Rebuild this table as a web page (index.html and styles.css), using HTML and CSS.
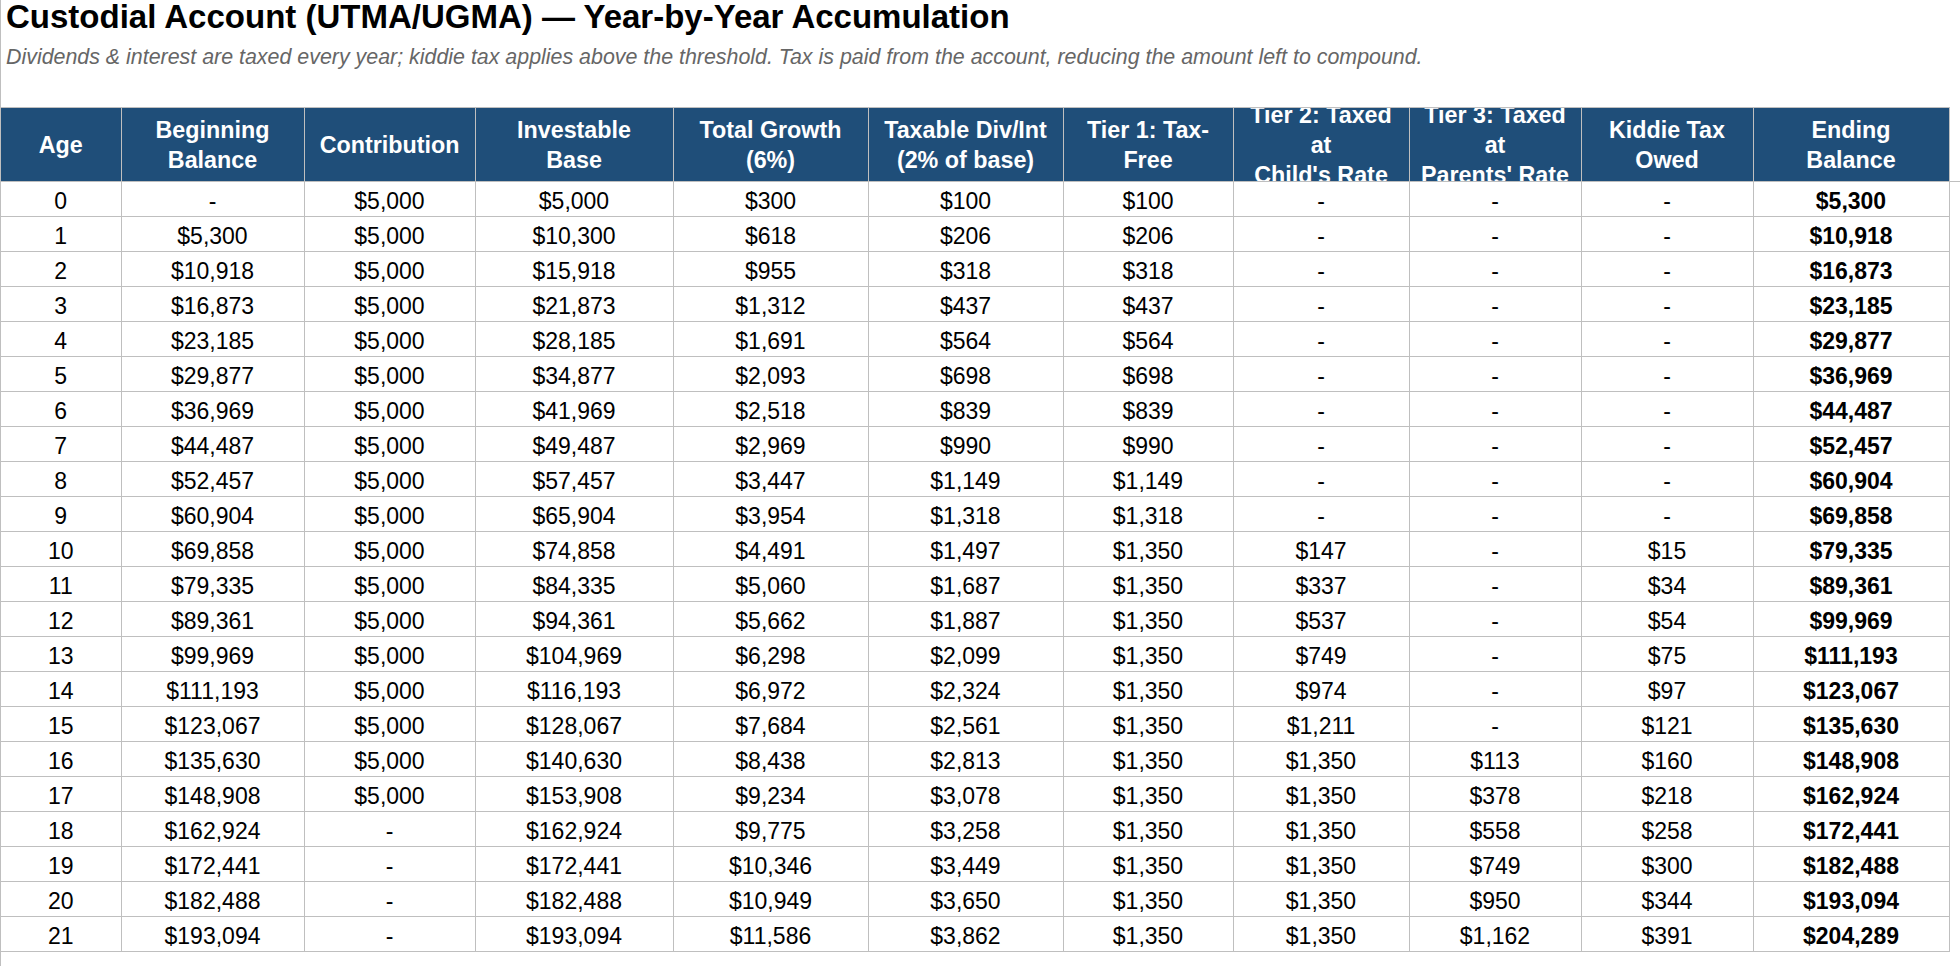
FILE: index.html
```html
<!DOCTYPE html>
<html lang="en">
<head>
<meta charset="utf-8">
<title>Custodial Account (UTMA/UGMA) — Year-by-Year Accumulation</title>
<link rel="stylesheet" href="styles.css">
</head>
<body>
<div class="sheet">
  <header class="sheet-head">
    <h1 class="title">Custodial Account (UTMA/UGMA) — Year-by-Year Accumulation</h1>
    <p class="subtitle">Dividends &amp; interest are taxed every year; kiddie tax applies above the threshold. Tax is paid from the account, reducing the amount left to compound.</p>
  </header>
  <table class="grid">
    <colgroup>
      <col class="c-age"><col class="c-beg"><col class="c-con"><col class="c-inv"><col class="c-gro"><col class="c-div"><col class="c-t1"><col class="c-t2"><col class="c-t3"><col class="c-kid"><col class="c-end"><col class="c-pad">
    </colgroup>
    <thead>
      <tr>
        <th class="hcell first"><div class="hd">Age</div></th>
        <th class="hcell"><div class="hd">Beginning<br>Balance</div></th>
        <th class="hcell"><div class="hd">Contribution</div></th>
        <th class="hcell"><div class="hd">Investable<br>Base</div></th>
        <th class="hcell"><div class="hd">Total Growth<br>(6%)</div></th>
        <th class="hcell"><div class="hd">Taxable Div/Int<br>(2% of base)</div></th>
        <th class="hcell"><div class="hd">Tier 1: Tax-Free</div></th>
        <th class="hcell"><div class="hd">Tier 2: Taxed at<br>Child's Rate</div></th>
        <th class="hcell"><div class="hd">Tier 3: Taxed at<br>Parents' Rate</div></th>
        <th class="hcell"><div class="hd">Kiddie Tax<br>Owed</div></th>
        <th class="hcell"><div class="hd">Ending<br>Balance</div></th>
        <th class="hpad"></th>
      </tr>
    </thead>
    <tbody>
      <tr><td class="first">0</td><td>-</td><td>$5,000</td><td>$5,000</td><td>$300</td><td>$100</td><td>$100</td><td>-</td><td>-</td><td>-</td><td class="end">$5,300</td><td class="pad"></td></tr>
      <tr><td class="first">1</td><td>$5,300</td><td>$5,000</td><td>$10,300</td><td>$618</td><td>$206</td><td>$206</td><td>-</td><td>-</td><td>-</td><td class="end">$10,918</td><td class="pad"></td></tr>
      <tr><td class="first">2</td><td>$10,918</td><td>$5,000</td><td>$15,918</td><td>$955</td><td>$318</td><td>$318</td><td>-</td><td>-</td><td>-</td><td class="end">$16,873</td><td class="pad"></td></tr>
      <tr><td class="first">3</td><td>$16,873</td><td>$5,000</td><td>$21,873</td><td>$1,312</td><td>$437</td><td>$437</td><td>-</td><td>-</td><td>-</td><td class="end">$23,185</td><td class="pad"></td></tr>
      <tr><td class="first">4</td><td>$23,185</td><td>$5,000</td><td>$28,185</td><td>$1,691</td><td>$564</td><td>$564</td><td>-</td><td>-</td><td>-</td><td class="end">$29,877</td><td class="pad"></td></tr>
      <tr><td class="first">5</td><td>$29,877</td><td>$5,000</td><td>$34,877</td><td>$2,093</td><td>$698</td><td>$698</td><td>-</td><td>-</td><td>-</td><td class="end">$36,969</td><td class="pad"></td></tr>
      <tr><td class="first">6</td><td>$36,969</td><td>$5,000</td><td>$41,969</td><td>$2,518</td><td>$839</td><td>$839</td><td>-</td><td>-</td><td>-</td><td class="end">$44,487</td><td class="pad"></td></tr>
      <tr><td class="first">7</td><td>$44,487</td><td>$5,000</td><td>$49,487</td><td>$2,969</td><td>$990</td><td>$990</td><td>-</td><td>-</td><td>-</td><td class="end">$52,457</td><td class="pad"></td></tr>
      <tr><td class="first">8</td><td>$52,457</td><td>$5,000</td><td>$57,457</td><td>$3,447</td><td>$1,149</td><td>$1,149</td><td>-</td><td>-</td><td>-</td><td class="end">$60,904</td><td class="pad"></td></tr>
      <tr><td class="first">9</td><td>$60,904</td><td>$5,000</td><td>$65,904</td><td>$3,954</td><td>$1,318</td><td>$1,318</td><td>-</td><td>-</td><td>-</td><td class="end">$69,858</td><td class="pad"></td></tr>
      <tr><td class="first">10</td><td>$69,858</td><td>$5,000</td><td>$74,858</td><td>$4,491</td><td>$1,497</td><td>$1,350</td><td>$147</td><td>-</td><td>$15</td><td class="end">$79,335</td><td class="pad"></td></tr>
      <tr><td class="first">11</td><td>$79,335</td><td>$5,000</td><td>$84,335</td><td>$5,060</td><td>$1,687</td><td>$1,350</td><td>$337</td><td>-</td><td>$34</td><td class="end">$89,361</td><td class="pad"></td></tr>
      <tr><td class="first">12</td><td>$89,361</td><td>$5,000</td><td>$94,361</td><td>$5,662</td><td>$1,887</td><td>$1,350</td><td>$537</td><td>-</td><td>$54</td><td class="end">$99,969</td><td class="pad"></td></tr>
      <tr><td class="first">13</td><td>$99,969</td><td>$5,000</td><td>$104,969</td><td>$6,298</td><td>$2,099</td><td>$1,350</td><td>$749</td><td>-</td><td>$75</td><td class="end">$111,193</td><td class="pad"></td></tr>
      <tr><td class="first">14</td><td>$111,193</td><td>$5,000</td><td>$116,193</td><td>$6,972</td><td>$2,324</td><td>$1,350</td><td>$974</td><td>-</td><td>$97</td><td class="end">$123,067</td><td class="pad"></td></tr>
      <tr><td class="first">15</td><td>$123,067</td><td>$5,000</td><td>$128,067</td><td>$7,684</td><td>$2,561</td><td>$1,350</td><td>$1,211</td><td>-</td><td>$121</td><td class="end">$135,630</td><td class="pad"></td></tr>
      <tr><td class="first">16</td><td>$135,630</td><td>$5,000</td><td>$140,630</td><td>$8,438</td><td>$2,813</td><td>$1,350</td><td>$1,350</td><td>$113</td><td>$160</td><td class="end">$148,908</td><td class="pad"></td></tr>
      <tr><td class="first">17</td><td>$148,908</td><td>$5,000</td><td>$153,908</td><td>$9,234</td><td>$3,078</td><td>$1,350</td><td>$1,350</td><td>$378</td><td>$218</td><td class="end">$162,924</td><td class="pad"></td></tr>
      <tr><td class="first">18</td><td>$162,924</td><td>-</td><td>$162,924</td><td>$9,775</td><td>$3,258</td><td>$1,350</td><td>$1,350</td><td>$558</td><td>$258</td><td class="end">$172,441</td><td class="pad"></td></tr>
      <tr><td class="first">19</td><td>$172,441</td><td>-</td><td>$172,441</td><td>$10,346</td><td>$3,449</td><td>$1,350</td><td>$1,350</td><td>$749</td><td>$300</td><td class="end">$182,488</td><td class="pad"></td></tr>
      <tr><td class="first">20</td><td>$182,488</td><td>-</td><td>$182,488</td><td>$10,949</td><td>$3,650</td><td>$1,350</td><td>$1,350</td><td>$950</td><td>$344</td><td class="end">$193,094</td><td class="pad"></td></tr>
      <tr><td class="first">21</td><td>$193,094</td><td>-</td><td>$193,094</td><td>$11,586</td><td>$3,862</td><td>$1,350</td><td>$1,350</td><td>$1,162</td><td>$391</td><td class="end">$204,289</td><td class="pad"></td></tr>
    </tbody>
  </table>
</div>
</body>
</html>
```

FILE: styles.css
```css
html, body {
  margin: 0;
  padding: 0;
  background: #ffffff;
}

body {
  font-family: "Liberation Sans", Arial, sans-serif;
  color: #000000;
}

.sheet {
  box-sizing: border-box;
  min-height: 966px;
  border-left: 1px solid #bfbfbf;
}

.sheet-head {
  padding-left: 5px;
}

.title {
  margin: 0;
  font-size: 33px;
  line-height: 34px;
  font-weight: 700;
  white-space: nowrap;
}

.subtitle {
  margin: 9px 0 0;
  font-size: 21.4px;
  line-height: 28px;
  font-style: italic;
  color: #666666;
  white-space: nowrap;
}

.grid {
  margin-top: 36px;
  border-collapse: collapse;
  table-layout: fixed;
  width: 1959px;
}

.c-age { width: 120px; }
.c-beg { width: 183px; }
.c-con { width: 171px; }
.c-inv { width: 198px; }
.c-gro { width: 195px; }
.c-div { width: 195px; }
.c-t1  { width: 170px; }
.c-t2  { width: 176px; }
.c-t3  { width: 172px; }
.c-kid { width: 172px; }
.c-end { width: 196px; }
.c-pad { width: 11px; }

.hcell {
  padding: 0;
  background: #1f4e79;
  color: #ffffff;
  font-size: 23.3px;
  font-weight: 700;
  border: 1px solid #bfbfbf;
}

.hcell.first {
  border-left: none;
}

.hd {
  box-sizing: border-box;
  height: 73px;
  padding: 0 6px;
  display: flex;
  flex-direction: column;
  justify-content: center;
  overflow: hidden;
  line-height: 30px;
  text-align: center;
}

.hpad {
  padding: 0;
  border: none;
  border-bottom: 1px solid #bfbfbf;
}

.grid td {
  padding: 4px 0 0;
  border: 1px solid #bfbfbf;
  font-size: 23px;
  line-height: 30px;
  text-align: center;
  vertical-align: middle;
  white-space: nowrap;
}

.grid td.first {
  border-left: none;
}

.grid td.end {
  font-weight: 700;
}

.grid td.pad {
  border: none;
}
```
